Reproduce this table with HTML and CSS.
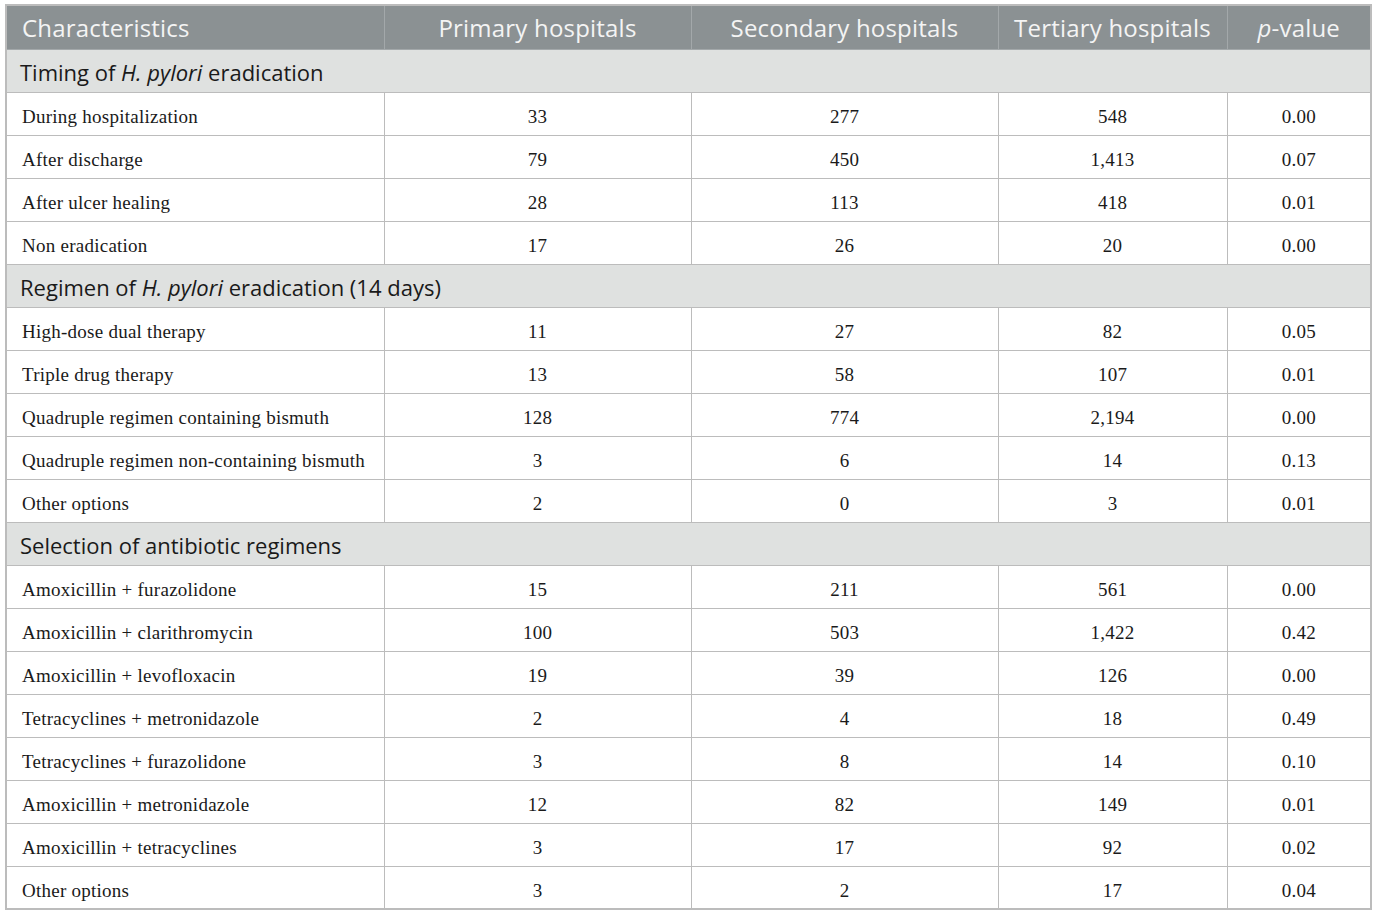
FILE: index.html
```html
<!DOCTYPE html>
<html lang="en">
<head>
  <meta charset="UTF-8" />
  <title>H. pylori eradication by hospital level</title>
  <link rel="stylesheet" href="styles.css">
</head>
<body>
  <table class="data">
    <colgroup>
      <col class="c1"><col class="c2"><col class="c3"><col class="c4"><col class="c5">
    </colgroup>
    <thead>
      <tr>
        <th class="left">Characteristics</th>
        <th>Primary hospitals</th>
        <th>Secondary hospitals</th>
        <th>Tertiary hospitals</th>
        <th><i>p</i>-value</th>
      </tr>
    </thead>
    <tbody>
      <tr class="section"><td colspan="5">Timing of <i>H. pylori</i> eradication</td></tr>
      <tr><td>During hospitalization</td><td>33</td><td>277</td><td>548</td><td>0.00</td></tr>
      <tr><td>After discharge</td><td>79</td><td>450</td><td>1,413</td><td>0.07</td></tr>
      <tr><td>After ulcer healing</td><td>28</td><td>113</td><td>418</td><td>0.01</td></tr>
      <tr><td>Non eradication</td><td>17</td><td>26</td><td>20</td><td>0.00</td></tr>
      <tr class="section"><td colspan="5">Regimen of <i>H. pylori</i> eradication (14 days)</td></tr>
      <tr><td>High-dose dual therapy</td><td>11</td><td>27</td><td>82</td><td>0.05</td></tr>
      <tr><td>Triple drug therapy</td><td>13</td><td>58</td><td>107</td><td>0.01</td></tr>
      <tr><td>Quadruple regimen containing bismuth</td><td>128</td><td>774</td><td>2,194</td><td>0.00</td></tr>
      <tr><td>Quadruple regimen non-containing bismuth</td><td>3</td><td>6</td><td>14</td><td>0.13</td></tr>
      <tr><td>Other options</td><td>2</td><td>0</td><td>3</td><td>0.01</td></tr>
      <tr class="section"><td colspan="5">Selection of antibiotic regimens</td></tr>
      <tr><td>Amoxicillin + furazolidone</td><td>15</td><td>211</td><td>561</td><td>0.00</td></tr>
      <tr><td>Amoxicillin + clarithromycin</td><td>100</td><td>503</td><td>1,422</td><td>0.42</td></tr>
      <tr><td>Amoxicillin + levofloxacin</td><td>19</td><td>39</td><td>126</td><td>0.00</td></tr>
      <tr><td>Tetracyclines + metronidazole</td><td>2</td><td>4</td><td>18</td><td>0.49</td></tr>
      <tr><td>Tetracyclines + furazolidone</td><td>3</td><td>8</td><td>14</td><td>0.10</td></tr>
      <tr><td>Amoxicillin + metronidazole</td><td>12</td><td>82</td><td>149</td><td>0.01</td></tr>
      <tr><td>Amoxicillin + tetracyclines</td><td>3</td><td>17</td><td>92</td><td>0.02</td></tr>
      <tr><td>Other options</td><td>3</td><td>2</td><td>17</td><td>0.04</td></tr>
    </tbody>
  </table>
</body>
</html>
```

FILE: styles.css
```css
body {
  margin: 0;
  padding: 4px 5px;
  background-color: white;
}

.data {
  border-collapse: collapse;
  table-layout: fixed;
  width: 1365px;
  border: 2px solid #bcbcbc;
}

.c1 { width: 378px; }
.c2 { width: 307px; }
.c3 { width: 307px; }
.c4 { width: 229px; }
.c5 { width: 144px; }

.data th,
.data td {
  border: 1px solid #bcbcbc;
  height: 43px;
  padding: 0;
  box-sizing: border-box;
}

.data th {
  background-color: #8b9193;
  color: #f4f4f4;
  font-family: "Open Sans", "Lato", sans-serif;
  font-weight: 400;
  font-size: 24px;
  letter-spacing: 0.2px;
  text-align: center;
  height: 44px;
  border-color: #a3a8aa;
}

.data th.left {
  text-align: left;
  padding-left: 15px;
}

.data td {
  font-family: "Liberation Serif", serif;
  font-size: 19px;
  letter-spacing: 0.25px;
  color: #1a1a1a;
  text-align: center;
  padding-top: 7px;
}

.data td:first-child {
  text-align: left;
  padding-left: 15px;
}

.data tr.section td {
  background-color: #dfe1e0;
  font-family: "Open Sans", "Lato", sans-serif;
  font-size: 22px;
  letter-spacing: 0;
  color: #1a1a1a;
  padding-left: 13px;
  padding-top: 2px;
}
```
